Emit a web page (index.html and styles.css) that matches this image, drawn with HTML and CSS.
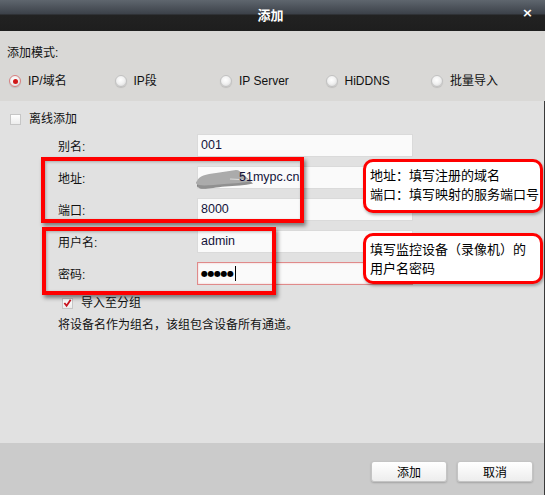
FILE: index.html
```html
<!DOCTYPE html>
<html lang="zh">
<head>
<meta charset="utf-8">
<title>添加</title>
<link rel="stylesheet" href="styles.css">
</head>
<body>
<div class="dialog">
  <div class="titlebar">
    <span class="title">添加</span>
    <span class="close">×</span>
  </div>
  <div class="mode">
    <div class="mode-label">添加模式:</div>
    <div class="modes">
      <label class="opt"><span class="radio on"></span>IP/域名</label>
      <label class="opt"><span class="radio"></span>IP段</label>
      <label class="opt"><span class="radio"></span>IP Server</label>
      <label class="opt"><span class="radio"></span>HiDDNS</label>
      <label class="opt"><span class="radio"></span>批量导入</label>
    </div>
  </div>
  <div class="form">
    <div class="check-row offline"><span class="checkbox"></span>离线添加</div>
    <div class="fields">
      <div class="lbl">别名:</div><div class="input">001</div>
      <div class="lbl">地址:</div><div class="input addr"><svg class="blob" width="60" height="22" viewBox="0 0 60 22"><path d="M3,15 C5,10 12,8 22,7 L44,4 C47,4 49,6 50,8 L58,15 C50,17 40,17 30,18 C20,19 10,21 5,20 C2,19 1,17 3,15 Z" fill="#4a4a4a" opacity="0.6" transform="translate(1,1.5)"/><path d="M3,14 C5,9 12,7 22,6 L42,3 C45,3 47,5 48,7 L57,14 C50,16 40,16 30,17 C20,18 10,19 5,18 C2,17 1,16 3,14 Z" fill="#ababab"/><path d="M36,12 L55,13" stroke="#d9d9d9" stroke-width="1.2"/></svg><span class="addr-text">51mypc.cn</span></div>
      <div class="lbl">端口:</div><div class="input">8000</div>
      <div class="lbl">用户名:</div><div class="input">admin</div>
      <div class="lbl">密码:</div><div class="input pwd"><span class="dots">●●●●●</span><span class="caret"></span></div>
    </div>
    <div class="check-row group"><span class="checkbox checked"><svg width="10" height="10" viewBox="0 0 10 10"><path d="M1.5,5 L4,8 L8.5,1.5" fill="none" stroke="#c8141e" stroke-width="2"/></svg></span>导入至分组</div>
    <div class="desc">将设备名作为组名，该组包含设备所有通道。</div>

    <div class="redbox box1"></div>
    <div class="redbox box2"></div>
    <div class="bubble bubble1">
      <div>地址：填写注册的域名</div>
      <div>端口：填写映射的服务端口号</div>
    </div>
    <div class="bubble bubble2">
      <div>填写监控设备（录像机）的</div>
      <div>用户名密码</div>
    </div>
  </div>
  <div class="footer">
    <button class="btn">添加</button>
    <button class="btn">取消</button>
  </div>
</div>
</body>
</html>
```
FILE: styles.css
```css
html, body {
  margin: 0;
  padding: 0;
}
body {
  width: 545px;
  height: 495px;
  overflow: hidden;
  font-family: "Liberation Sans", "Noto Sans CJK SC", sans-serif;
  font-size: 12px;
  color: #111;
}
.dialog {
  display: flex;
  flex-direction: column;
  height: 495px;
}
.titlebar {
  height: 31px;
  flex: none;
  position: relative;
  display: flex;
  align-items: center;
  justify-content: center;
  background: linear-gradient(to bottom, #5f666e 0px, #3c4149 14px, #222222 15px, #1e1e1e 31px);
}
.title {
  color: #fff;
  font-weight: bold;
  font-size: 13px;
  font-family: "Noto Sans CJK SC", sans-serif;
  line-height: 16px;
  margin-top: -2px;
  margin-left: -4px;
}
.close {
  position: absolute;
  right: 12px;
  top: 5px;
  color: #fff;
  font-weight: bold;
  font-size: 13px;
  line-height: 16px;
  font-family: "DejaVu Sans", sans-serif;
}
.mode {
  height: 70px;
  flex: none;
  background: #d9d8d6;
  box-sizing: border-box;
  padding-top: 13px;
}
.mode-label {
  padding-left: 7px;
  line-height: 18px;
  height: 18px;
}
.modes {
  display: grid;
  grid-template-columns: repeat(5, 105.5px);
  padding-left: 9px;
  margin-top: 10px;
}
.opt {
  display: flex;
  align-items: center;
  gap: 7px;
  height: 18px;
  line-height: 18px;
}
.radio {
  width: 12px;
  height: 12px;
  box-sizing: border-box;
  border-radius: 50%;
  border: 1px solid #c2c2c2;
  background: radial-gradient(circle at 45% 40%, #ffffff 0%, #f2f2f2 45%, #d2d2d2 100%);
  box-shadow: 0 1px 1px rgba(0,0,0,0.12);
  display: flex;
  align-items: center;
  justify-content: center;
  flex: none;
}
.radio.on {
  border-color: #d88080;
}
.radio.on::after {
  content: "";
  width: 5px;
  height: 5px;
  border-radius: 50%;
  background: #d01818;
}
.form {
  flex: 1;
  position: relative;
  background: #e1e1e1;
  border-right: 1px solid #3a3a3a;
  padding-top: 9px;
}
.check-row {
  display: flex;
  align-items: center;
  height: 18px;
  line-height: 18px;
}
.offline {
  padding-left: 10px;
  gap: 8px;
}
.checkbox {
  width: 11px;
  height: 11px;
  box-sizing: border-box;
  border: 1px solid #c6c6c6;
  background: linear-gradient(to bottom, #ffffff, #ececec);
  display: flex;
  align-items: center;
  justify-content: center;
  flex: none;
}
.fields {
  display: grid;
  grid-template-columns: 139px 216px;
  grid-auto-rows: 23px;
  row-gap: 9px;
  padding-left: 58px;
  margin-top: 6px;
}
.lbl {
  line-height: 23px;
  padding-top: 2px;
}
.input {
  box-sizing: border-box;
  background: #fafafa;
  border: 1px solid #dadada;
  padding-left: 3px;
  line-height: 21px;
  font-size: 12.5px;
  color: #14143a;
  position: relative;
  display: flex;
  align-items: center;
}
.addr {
  padding-left: 41px;
}
.addr-text {
  position: relative;
  z-index: 1;
}
.blob {
  position: absolute;
  left: -4px;
  top: 0px;
}
.pwd {
  border-color: #e08a8a;
  box-shadow: inset 0 0 2px rgba(220,80,80,0.35);
}
.dots {
  font-family: "DejaVu Sans", sans-serif;
  font-size: 8px;
  color: #000;
  letter-spacing: -0.5px;
}
.caret {
  width: 1px;
  height: 15px;
  background: #000;
  margin-left: 2px;
}
.group {
  padding-left: 62px;
  gap: 8px;
  margin-top: 9px;
}
.desc {
  padding-left: 58px;
  margin-top: 4px;
  line-height: 18px;
}
.redbox {
  position: absolute;
  border: 4px solid #ff0000;
  box-sizing: border-box;
  box-shadow: 2px 3px 4px rgba(0,0,0,0.45), inset 1px 1px 3px rgba(0,0,0,0.25);
}
.box1 {
  left: 41px;
  top: 56px;
  width: 263px;
  height: 66px;
}
.box2 {
  left: 42px;
  top: 126px;
  width: 234px;
  height: 68px;
}
.bubble {
  position: absolute;
  left: 363px;
  width: 180px;
  box-sizing: border-box;
  background: #fff;
  border: 3px solid #ff0000;
  border-radius: 10px;
  padding: 3px 0 0 4px;
  font-family: "Noto Sans CJK SC", sans-serif;
  font-size: 13px;
  line-height: 19px;
  color: #000;
  white-space: nowrap;
  box-shadow: 1px 2px 3px rgba(0,0,0,0.3);
}
.bubble1 {
  top: 58px;
  height: 54px;
}
.bubble2 {
  top: 132px;
  height: 51px;
}
.footer {
  height: 52px;
  flex: none;
  background: #cbcbcb;
  border-right: 1px solid #3a3a3a;
  display: flex;
  justify-content: flex-end;
  align-items: flex-start;
  gap: 10px;
  padding: 18px 11px 0 0;
  box-sizing: border-box;
}
.btn {
  width: 76px;
  height: 21px;
  border: 1px solid #c4c4c4;
  border-radius: 3px;
  background: linear-gradient(to bottom, #ffffff, #ededed);
  box-shadow: 0 1px 2px rgba(0,0,0,0.2);
  font-family: "Noto Sans CJK SC", sans-serif;
  font-size: 12px;
  color: #000;
  padding: 0;
  line-height: 19px;
}
```
